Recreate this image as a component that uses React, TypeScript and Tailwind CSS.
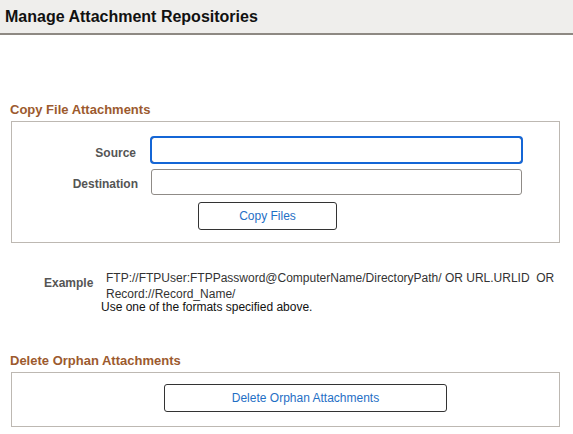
import { useState } from "react";

const FONT = { fontFamily: '"Liberation Sans", Arial, sans-serif' };

export default function App() {
  const [source, setSource] = useState("");
  const [destination, setDestination] = useState("");

  return (
    <div className="w-[573px] h-[434px] bg-white overflow-hidden" style={FONT}>
      {/* Page header */}
      <div className="h-[35px] bg-[#efeeec] border-b-2 border-[#8e8983] flex items-center px-[5px]">
        <h1 className="text-[16px] font-bold text-[#111] leading-none">Manage Attachment Repositories</h1>
      </div>

      {/* Copy File Attachments */}
      <div className="mt-[66px] px-[11px]">
        <h2 className="text-[13px] font-bold text-[#9c5a2e] leading-[18px] -ml-[1px]">Copy File Attachments</h2>
        <div className="mt-[2px] w-[549px] h-[122px] border border-[#bdb8b2] pt-[15px]">
          <div className="flex items-center h-[26px]">
            <label className="w-[139px] pr-[15px] pt-[5px] text-right text-[12px] font-bold text-[#555]">Source</label>
            <input
              value={source}
              onChange={(e) => setSource(e.target.value)}
              className="w-[371px] h-[26px] rounded-[3px] border border-[#8a5a3c] outline outline-2 outline-[#1466d6] -outline-offset-1 px-1 text-[12px]"
            />
          </div>
          <div className="flex items-center h-[26px] mt-[6px]">
            <label className="w-[139px] pr-[13px] pt-[3px] text-right text-[12px] font-bold text-[#555]">Destination</label>
            <input
              value={destination}
              onChange={(e) => setDestination(e.target.value)}
              className="w-[371px] h-[26px] rounded-[3px] border border-[#8f8b87] px-1 text-[12px] outline-none"
            />
          </div>
          <div className="mt-[7px] pl-[186px]">
            <button className="w-[139px] h-[28px] rounded-[3px] border border-[#333] bg-white text-[12px] text-[#1f6fc5]">
              Copy Files
            </button>
          </div>
        </div>
      </div>

      {/* Example */}
      <div className="mt-[27px] text-[12px] leading-[16px]">
        <div className="flex items-start">
          <div className="w-[106px] pl-[44px] pt-[5px] font-bold text-[#555]">Example</div>
          <div className="text-[#333]">
            FTP://FTPUser:FTPPassword@ComputerName/DirectoryPath/ OR URL.URLID&nbsp; OR
            <br />
            Record://Record_Name/
          </div>
        </div>
        <div className="pl-[101px] -mt-[3px] text-[#111]">Use one of the formats specified above.</div>
      </div>

      {/* Delete Orphan Attachments */}
      <div className="mt-[37px] px-[11px]">
        <h2 className="text-[13px] font-bold text-[#9c5a2e] leading-[18px] -ml-[1px]">Delete Orphan Attachments</h2>
        <div className="mt-[2px] w-[549px] h-[55px] border border-[#bdb8b2] pt-[11px] pl-[152px]">
          <button className="w-[283px] h-[28px] rounded-[3px] border border-[#333] bg-white text-[12px] text-[#1f6fc5]">
            Delete Orphan Attachments
          </button>
        </div>
      </div>
    </div>
  );
}
